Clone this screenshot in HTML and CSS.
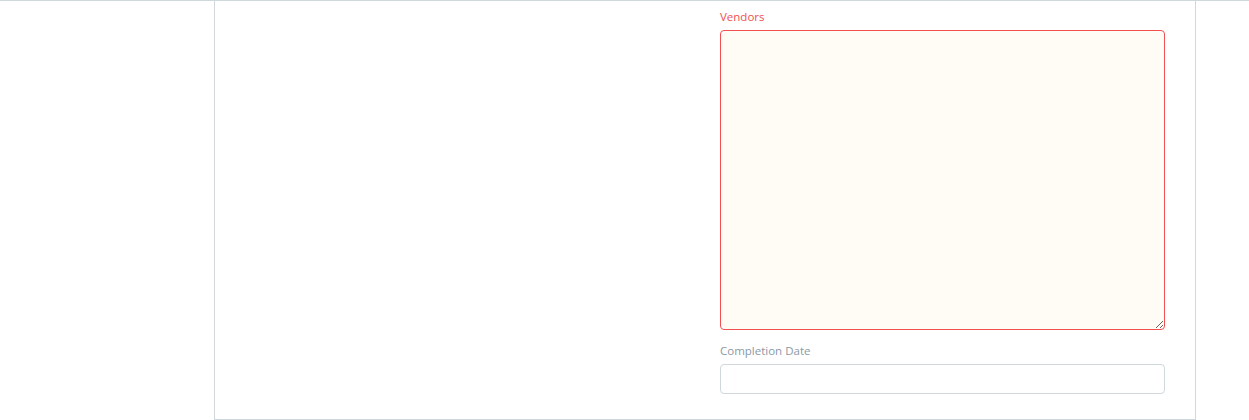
FILE: index.html
```html
<!DOCTYPE html>
<html>
<head>
<meta charset="utf-8">
<link rel="stylesheet" href="styles.css">
</head>
<body>
<div class="topline"></div>
<div class="panel">
  <div class="row">
    <div class="col"></div>
    <div class="col">
      <div class="group group-error">
        <label class="label">Vendors</label>
        <textarea class="textarea"></textarea>
      </div>
      <div class="group last">
        <label class="label">Completion Date</label>
        <input class="input" type="text">
      </div>
    </div>
  </div>
</div>
</body>
</html>
```
FILE: styles.css
```css
html, body {
  margin: 0;
  padding: 0;
  background: #fff;
  font-family: "Open Sans", "Liberation Sans", sans-serif;
}
.topline {
  height: 1px;
  background: #cfd8dc;
}
.panel {
  margin-left: 214px;
  width: 950px;
  border-left: 1px solid #cfd8dc;
  border-right: 1px solid #cfd8dc;
  border-bottom: 1px solid #cfd8dc;
  padding: 8px 15px 10px;
}
.row {
  display: flex;
}
.col {
  flex: 1;
  padding: 0 15px;
}
.group {
  margin-bottom: 13px;
}
.group.last {
  margin-bottom: 15px;
}
.label {
  display: block;
  font-size: 11.5px;
  line-height: 16px;
  margin-bottom: 5px;
  color: #8b99a6;
}
.group-error .label {
  color: #f05050;
}
.textarea, .input {
  display: block;
  width: 100%;
  box-sizing: border-box;
  border: 1px solid #cfd8dc;
  border-radius: 4px;
  background: #fff;
  font-family: inherit;
  font-size: 13px;
  margin: 0;
}
.textarea {
  height: 300px;
  background: #fffcf5;
  border-color: #f05050;
  resize: vertical;
}
.input {
  height: 30px;
}
```
